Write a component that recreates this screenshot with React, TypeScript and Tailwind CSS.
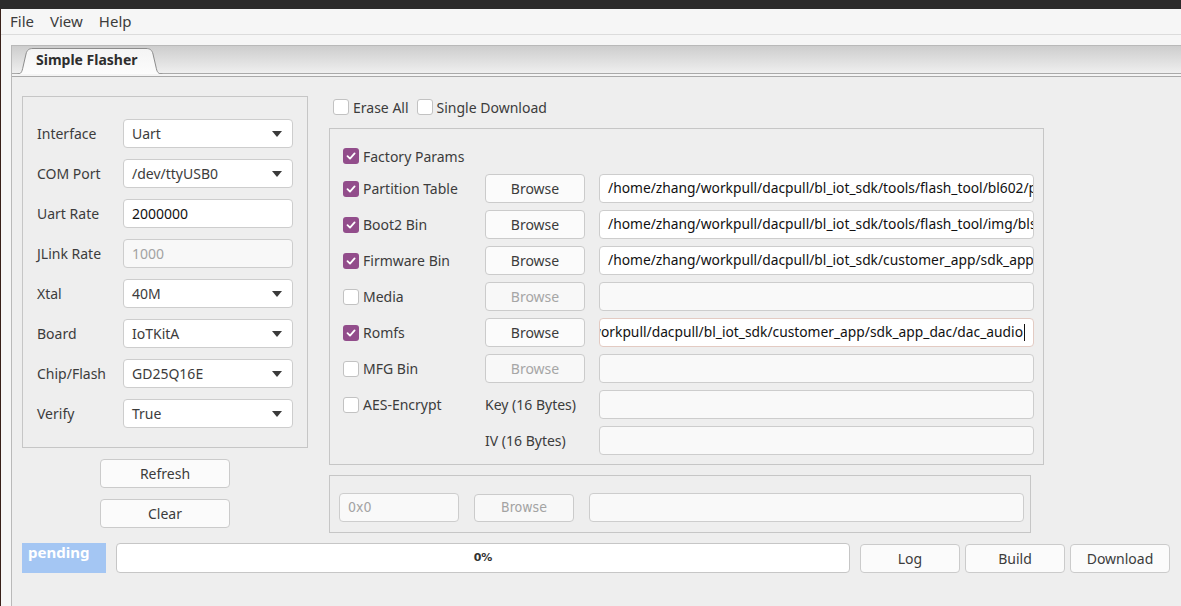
import React from 'react';

const FONT = "font-['Noto_Sans',sans-serif]";

function Check({ checked }: { checked?: boolean }) {
    if (checked) {
        return (
            <span className="w-4 h-4 rounded-[3px] bg-[#924d8b] flex items-center justify-center shrink-0">
                <svg width="12" height="12" viewBox="0 0 12 12">
                    <path d="M2.5 6.2 L5 8.6 L9.6 3.4" fill="none" stroke="#fff" strokeWidth="1.8" strokeLinecap="round" strokeLinejoin="round" />
                </svg>
            </span>
        );
    }
    return <span className="w-4 h-4 rounded-[3px] bg-white border border-[#c2c2c2] shrink-0" />;
}

function Combo({ value }: { value: string }) {
    return (
        <div className="w-[170px] h-[29px] bg-white border border-[#cdcdcd] rounded-[4px] flex items-center justify-between pl-[8px] pr-[10px] text-[#3c3c3c]">
            <span>{value}</span>
            <svg width="10" height="6" viewBox="0 0 10 6">
                <polygon points="0,0 10,0 5,6" fill="#3a3a3a" />
            </svg>
        </div>
    );
}

function Field({ value, disabled }: { value: string; disabled?: boolean }) {
    return (
        <div className={`w-[170px] h-[29px] border border-[#cdcdcd] rounded-[4px] flex items-center pl-[8px] ${disabled ? 'bg-[#f8f8f8] text-[#a3a3a3]' : 'bg-white text-[#111]'}`}>
            {value}
        </div>
    );
}

function Button({ label, disabled, w = 'w-[100px]' }: { label: string; disabled?: boolean; w?: string }) {
    return (
        <div className={`${w} h-[29px] border border-[#cbcbcb] rounded-[4px] flex items-center justify-center shrink-0 ${disabled ? 'bg-[#f8f8f8] text-[#a6a6a6]' : 'bg-[#fbfbfb] text-[#3c3c3c]'}`}>
            {label}
        </div>
    );
}

function PathBox({ value, end, empty, focused }: { value?: string; end?: boolean; empty?: boolean; focused?: boolean }) {
    return (
        <div className={`w-[435px] h-[29px] rounded-[4px] border flex items-center overflow-hidden px-[8px] ${focused ? 'border-[#e3cbc3]' : 'border-[#cdcdcd]'} ${empty ? 'bg-[#f9f9f9]' : 'bg-white'} ${end ? 'justify-end' : ''}`}>
            {value && (
                <span className="whitespace-nowrap text-[#111] text-[13.8px] flex items-center">
                    {value}
                    {focused && <span className="inline-block w-px h-[17px] bg-[#111] ml-px" />}
                </span>
            )}
        </div>
    );
}

const leftRows: { label: string; kind: 'combo' | 'field' | 'disabled'; value: string }[] = [
    { label: 'Interface', kind: 'combo', value: 'Uart' },
    { label: 'COM Port', kind: 'combo', value: '/dev/ttyUSB0' },
    { label: 'Uart Rate', kind: 'field', value: '2000000' },
    { label: 'JLink Rate', kind: 'disabled', value: '1000' },
    { label: 'Xtal', kind: 'combo', value: '40M' },
    { label: 'Board', kind: 'combo', value: 'IoTKitA' },
    { label: 'Chip/Flash', kind: 'combo', value: 'GD25Q16E' },
    { label: 'Verify', kind: 'combo', value: 'True' },
];

const imageRows = [
    { label: 'Partition Table', checked: true, path: '/home/zhang/workpull/dacpull/bl_iot_sdk/tools/flash_tool/bl602/partition/partition_cfg_2M.toml' },
    { label: 'Boot2 Bin', checked: true, path: '/home/zhang/workpull/dacpull/bl_iot_sdk/tools/flash_tool/img/blsp_boot2.bin' },
    { label: 'Firmware Bin', checked: true, path: '/home/zhang/workpull/dacpull/bl_iot_sdk/customer_app/sdk_app_dac/build_out/dac_audio.bin' },
    { label: 'Media', checked: false, path: '' },
    { label: 'Romfs', checked: true, path: '/home/zhang/workpull/dacpull/bl_iot_sdk/customer_app/sdk_app_dac/dac_audio', end: true },
    { label: 'MFG Bin', checked: false, path: '' },
];

export default function App() {
    return (
        <div className={`w-[1181px] h-[606px] overflow-hidden bg-[#2c2b2b] flex flex-col text-[14px] ${FONT}`}>
            <div className="h-[9px] shrink-0" />
            <div className="flex-1 flex bg-[#3a211a]">
                <div className="w-px shrink-0" />
                <div className="flex-1 flex flex-col bg-[#f6f6f6]">
                    {/* menu bar */}
                    <div className="h-[26px] flex items-center gap-[16px] pl-[9px] text-[15px] text-[#3c3c3c] border-b border-[#dcdcdc]">
                        <span>File</span>
                        <span>View</span>
                        <span>Help</span>
                    </div>
                    <div className="h-[10px]" />

                    {/* notebook */}
                    <div className="flex-1 ml-[10px] border-l border-t border-[#b9b9b9] bg-[#eeeeee] flex flex-col">
                        <div className="h-[27px] bg-gradient-to-b from-[#cdcdcd] to-[#efefef] relative">
                            <svg className="absolute left-[5px] top-[2px]" width="146" height="26" viewBox="0 0 146 26">
                                <defs>
                                    <linearGradient id="tabg" x1="0" y1="0" x2="0" y2="1">
                                        <stop offset="0" stopColor="#f4f4f4" />
                                        <stop offset="1" stopColor="#fcfcfc" />
                                    </linearGradient>
                                </defs>
                                <path d="M0.5 26 C4 26 5 24 6 19 L9 6 C10 2 12 0.5 16 0.5 L129 0.5 C133 0.5 135 2 136 6 L139 19 C140 24 141 26 145.5 26" fill="url(#tabg)" stroke="#8c8c8c" strokeWidth="1" />
                            </svg>
                            <span className="absolute left-[24px] top-[3px] font-bold text-[#2e2e2e]">Simple Flasher</span>
                        </div>
                        <div className="h-[4px] border-t border-b border-[#a9a9a9] bg-[#f4f4f4]" />

                        <div className="flex-1 flex flex-col pl-[10px] pt-[19px]">
                            <div className="flex gap-[21px]">
                                {/* left column */}
                                <div className="w-[286px] flex flex-col items-center">
                                    <div className="w-full border border-[#c6c6c6] pt-[22px] pb-[19px] pl-[14px] pr-[14px] flex flex-col gap-[11px]">
                                        {leftRows.map((r) => (
                                            <div key={r.label} className="flex items-center justify-between">
                                                <span className="text-[#3c3c3c]">{r.label}</span>
                                                {r.kind === 'combo' && <Combo value={r.value} />}
                                                {r.kind === 'field' && <Field value={r.value} />}
                                                {r.kind === 'disabled' && <Field value={r.value} disabled />}
                                            </div>
                                        ))}
                                    </div>
                                    <div className="flex flex-col gap-[11px] mt-[11px]">
                                        <Button label="Refresh" w="w-[130px]" />
                                        <Button label="Clear" w="w-[130px]" />
                                    </div>
                                </div>

                                {/* right column */}
                                <div className="flex flex-col">
                                    <div className="h-[22px] flex items-center pl-[4px] text-[#3c3c3c]">
                                        <Check />
                                        <span className="ml-[4px]">Erase All</span>
                                        <span className="ml-[8px] flex"><Check /></span>
                                        <span className="ml-[4px]">Single Download</span>
                                    </div>
                                    <div className="mt-[10px] w-[715px] border border-[#c6c6c6] pt-[17px] pb-[9px] pl-[13px] pr-[9px] flex flex-col gap-[7px] text-[#3c3c3c]">
                                        <div className="h-[20px] mb-[1px] flex items-center gap-[4px]">
                                            <Check checked />
                                            <span>Factory Params</span>
                                        </div>
                                        {imageRows.map((r) => (
                                            <div key={r.label} className="h-[29px] flex items-center">
                                                <div className="w-[142px] flex items-center gap-[4px]">
                                                    <Check checked={r.checked} />
                                                    <span>{r.label}</span>
                                                </div>
                                                <Button label="Browse" disabled={!r.checked} />
                                                <div className="ml-[14px]">
                                                    <PathBox value={r.path} empty={!r.path} end={r.end} focused={r.end} />
                                                </div>
                                            </div>
                                        ))}
                                        <div className="h-[29px] flex items-center">
                                            <div className="w-[142px] flex items-center gap-[4px]">
                                                <Check />
                                                <span>AES-Encrypt</span>
                                            </div>
                                            <span className="w-[114px]">Key (16 Bytes)</span>
                                            <PathBox empty />
                                        </div>
                                        <div className="h-[29px] flex items-center">
                                            <div className="w-[142px]" />
                                            <span className="w-[114px]">IV (16 Bytes)</span>
                                            <PathBox empty />
                                        </div>
                                    </div>
                                    <div className="mt-[10px] w-[702px] border border-[#c6c6c6] pt-[17px] pb-[10px] pl-[9px] flex items-center gap-[15px] text-[14px] font-['DejaVu_Sans_Condensed','DejaVu_Sans',sans-serif]">
                                        <div className="w-[120px] h-[29px] rounded-[4px] border border-[#cdcdcd] bg-[#f9f9f9] text-[#a3a3a3] flex items-center pl-[8px]">0x0</div>
                                        <div className="w-[100px] h-[28px] rounded-[4px] border border-[#cbcbcb] bg-[#f8f8f8] text-[#a3a3a3] flex items-center justify-center">Browse</div>
                                        <div className="w-[435px] h-[29px] rounded-[4px] border border-[#cdcdcd] bg-[#f9f9f9]" />
                                    </div>
                                </div>
                            </div>

                            {/* bottom bar */}
                            <div className="mt-[10px] flex items-center h-[30px]">
                                <div className="w-[84px] h-[30px] bg-[#a4c6f3] text-white font-bold text-[15px] leading-none pt-[2px] pl-[6px]">pending</div>
                                <div className="ml-[10px] w-[734px] h-[30px] bg-white border border-[#c6c6c6] rounded-[4px] flex items-center justify-center text-[11px] font-bold text-[#333] font-['DejaVu_Sans',sans-serif]">0%</div>
                                <div className="ml-[10px] flex gap-[5px]">
                                    <Button label="Log" />
                                    <Button label="Build" />
                                    <Button label="Download" />
                                </div>
                            </div>
                        </div>
                    </div>
                </div>
            </div>
        </div>
    );
}
